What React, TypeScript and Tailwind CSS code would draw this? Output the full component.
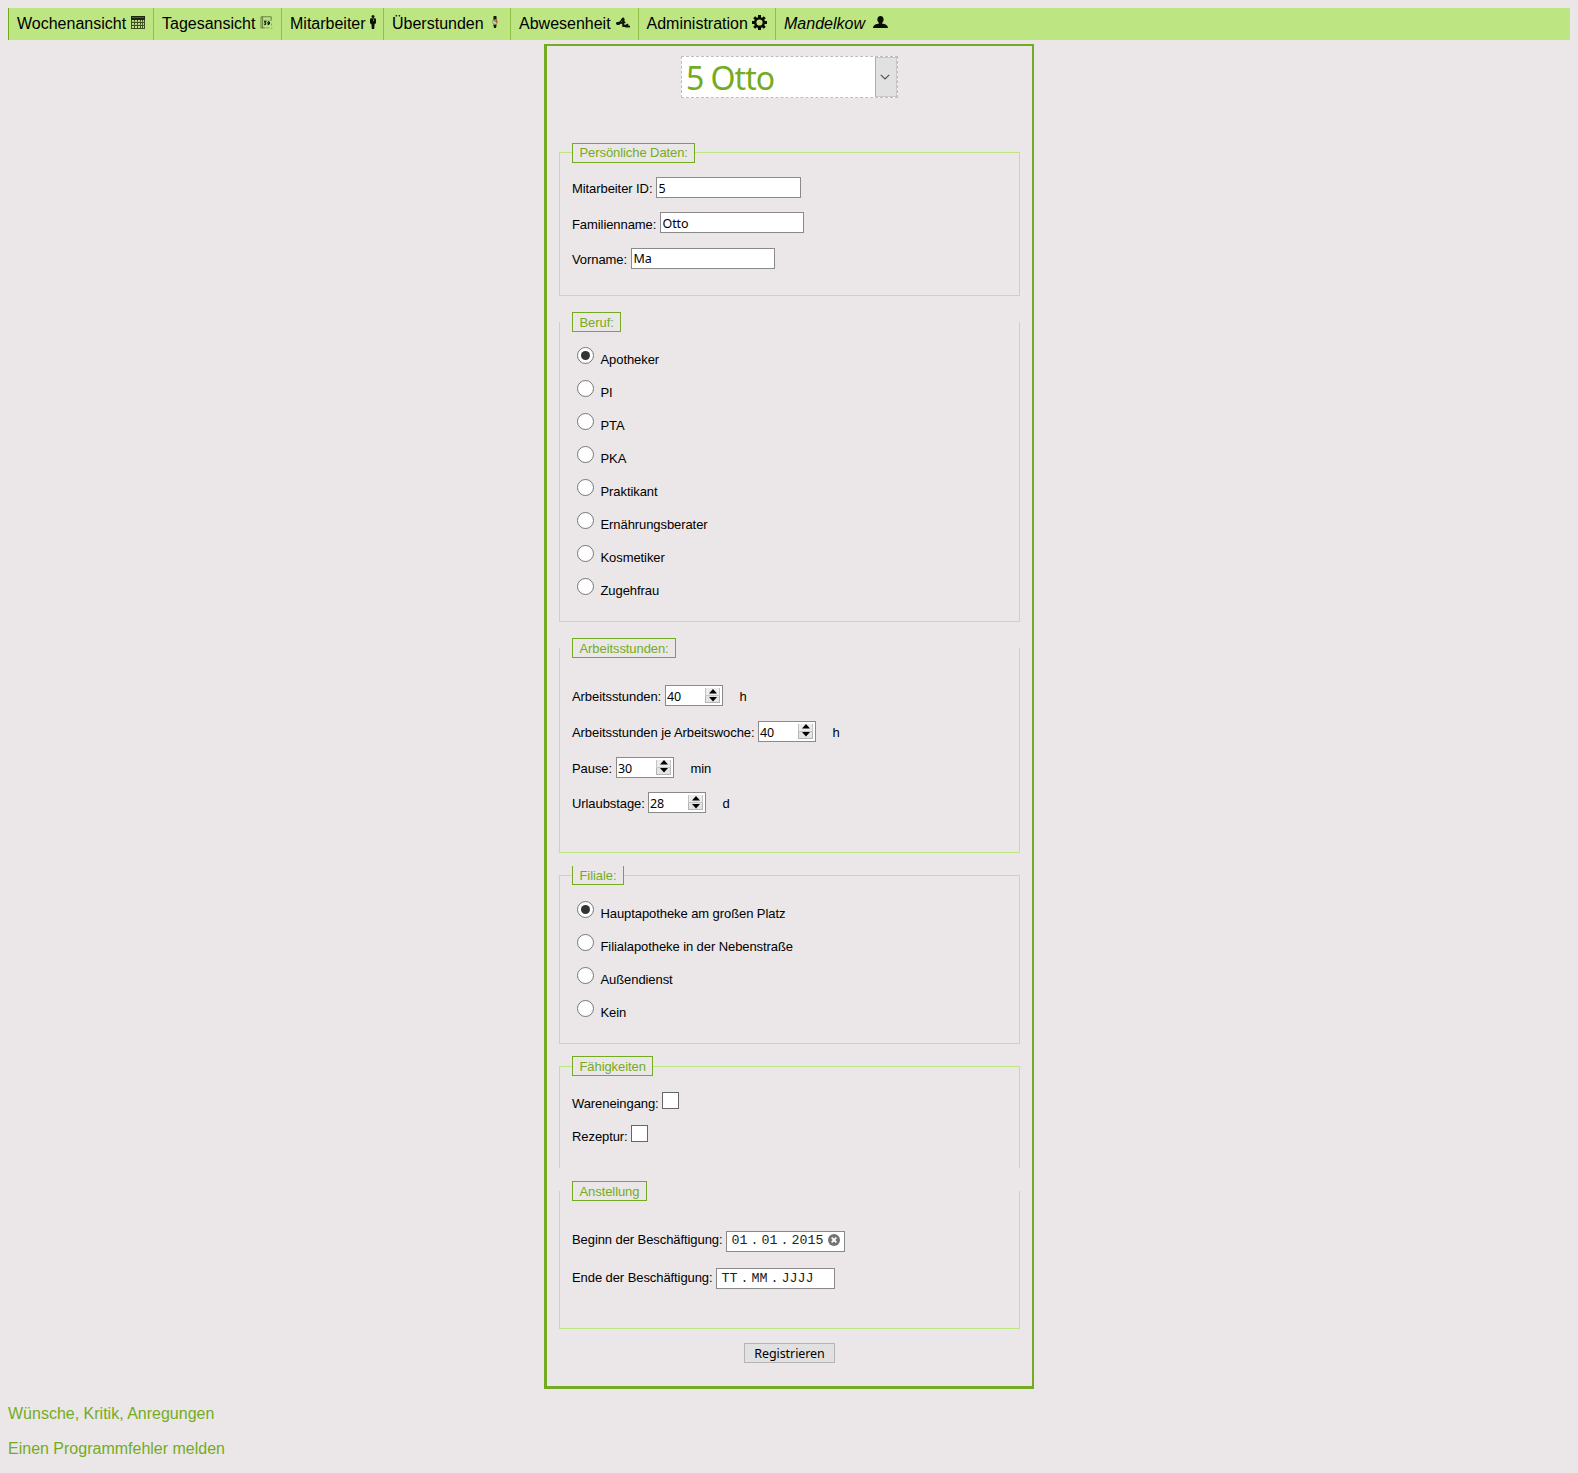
import React from "react";

function CalendarIcon() {
  return (
    <svg className="h-[13px] w-[14px]" viewBox="0 0 14 13" shapeRendering="crispEdges">
      <rect x="0" y="0" width="14" height="4" fill="#1c2611" />
      <rect x="1" y="1" width="12" height="1" fill="#4c5e33" />
      <path d="M0.5 4v8.500h13V4M0 6.500h14M0 9.500h14M3.500 4v8M6.500 4v8M9.500 4v8M11.500 4v8" fill="none" stroke="#3d4f25" strokeWidth="1" />
      <path d="M1 5.500h12M1 8.500h12" stroke="#93b364" strokeWidth="1" opacity="0.4" />
    </svg>
  );
}

function DayIcon() {
  return (
    <svg className="h-[13px] w-[13px]" viewBox="0 0 13 13">
      <path d="M1 12V.8h10.200v4M1 11.900h4M2.600 1v11" fill="none" stroke="#5d753d" strokeWidth="0.9" />
      <path d="M2.500 4.200h8.500" stroke="#86a35c" strokeWidth="0.6" />
      <path d="M4.200 5.400h1.600l-1 1.400c1.400 0 1.400 1.900-.6 1.800M9.300 6.200c-1.400-.9-2 1.100-.9 1.300 1.300.1 1.300-1 .9-1.300.4 1.200.3 2.300-1.700 2.400" fill="none" stroke="#10150a" strokeWidth="1.100" />
      <path d="M5.500 11.800h4M11.500 7.500v2M10.800 12.200h1.600" stroke="#7d9a55" strokeWidth="0.8" />
    </svg>
  );
}

function PersonIcon() {
  return (
    <svg className="ml-px h-[14px] w-[6px]" viewBox="0 0 6 14" preserveAspectRatio="none">
      <circle cx="3" cy="1.500" r="1.500" fill="#111a08" />
      <path d="M1.200 3.200h3.600c.8 0 1.200.6 1.200 1.500v3.600L4.600 9 4.200 14H1.800L1.400 9 0 8.300V4.700c0-.9.4-1.500 1.200-1.500Z" fill="#0b1004" />
      <path d="M3 3.400 4 5.500l-.7 1Z" fill="#bde682" />
    </svg>
  );
}

function WatchIcon() {
  return (
    <svg className="h-[13px] w-[6px]" viewBox="0 0 6 13">
      <path d="M1.600 0h2.800l.3 4H1.300ZM1.300 8.400h3.400L4 12H2Z" fill="#141909" />
      <circle cx="3" cy="5.900" r="2.400" fill="#d2dcb7" stroke="#6c7a4d" strokeWidth="0.7" />
      <path d="m2 4.200 1.200 1.400" fill="none" stroke="#333" strokeWidth="0.8" />
      <path d="M2.800 4.400h2.200v2h-1Z" fill="#e02b13" />
    </svg>
  );
}

function BeachIcon() {
  return (
    <svg className="h-[11px] w-[14px]" viewBox="0 0 14 11">
      <path d="M0 6.400c0-1 .8-1.500 2-1.400l2-.8L5 2.500 6.300.8l1.400-.3.8 1.300.1 2.700 1 .5-.2.900-1 .2v1.800l1.700-.3.900-1 1.400.6v1.300l1.500.2.400 1-.6.900H10l-1.200-.5-2.400-.2-.3-3.200-1.900.3-1 1H.9Z" fill="#10180a" />
      <path d="m5.200 4.800 1-.8" stroke="#8cab60" strokeWidth="0.800" />
    </svg>
  );
}

function GearIcon() {
  return (
    <svg className="h-[15px] w-[15px]" viewBox="0 0 15 15">
      <g fill="#0a0e04">
        <path d="M6 0h3v3.500H6ZM6 11.500h3V15H6ZM0 6h3.500v3H0ZM11.500 6H15v3h-3.500Z" />
        <path d="m1.200 3.200 2-2 2.400 2.400-2 2ZM9.400 11.400l2-2 2.400 2.400-2 2ZM11.800 1.200l2 2-2.400 2.400-2-2ZM3.600 9.400l2 2-2.400 2.400-2-2Z" />
      </g>
      <circle cx="7.500" cy="7.500" r="4.300" fill="none" stroke="#0a0e04" strokeWidth="2.400" />
    </svg>
  );
}

function UserIcon() {
  return (
    <svg className="h-[12px] w-[15px]" viewBox="0 0 15 12">
      <ellipse cx="7.500" cy="3.500" rx="3.100" ry="3.500" fill="#0a0e04" />
      <path d="M6 6h3v1.600c3 .5 5.600 1.300 6 4.400H0c.4-3.100 3-3.900 6-4.400Z" fill="#0a0e04" />
    </svg>
  );
}

const navItems = [
  { label: "Wochenansicht", width: "w-[145px]", text: "w-[114px]", icon: <CalendarIcon />, pad: "pt-2" },
  { label: "Tagesansicht", width: "w-[128px]", text: "w-[98px]", icon: <DayIcon />, pad: "pt-2" },
  { label: "Mitarbeiter", width: "w-[102px]", text: "w-[79px]", icon: <PersonIcon />, pad: "pt-[7px]" },
  { label: "Überstunden", width: "w-[127px]", text: "w-[100px]", icon: <WatchIcon />, pad: "pt-2" },
  { label: "Abwesenheit", width: "w-[128px]", text: "w-[97px]", icon: <BeachIcon />, pad: "pt-[9px]" },
  { label: "Administration", width: "w-[137px]", text: "w-[105px] -ml-[0.5px] mr-[0.5px]", icon: <GearIcon />, pad: "pt-[7px]" },
  { label: "Mandelkow", width: "w-[130px]", text: "w-[89px] italic", icon: <UserIcon />, pad: "pt-2" },
];

function Group({ title, box, legend, body, children }: { title: string; box: string; legend: string; body: string; children: React.ReactNode }) {
  return (
    <section className={`border-[#bde682] pl-3 ${box}`}>
      <h2 className={`whitespace-nowrap border-[#73ac22] bg-[#ebe7e8] pl-[6.5px] text-[#73ac22] ${legend}`}>{title}</h2>
      <div className={`flex flex-col ${body}`}>{children}</div>
    </section>
  );
}

function Radio({ label, checked = false }: { label: string; checked?: boolean }) {
  return (
    <label className="flex h-[33px] pl-[5px]">
      <span className="flex size-[17px] items-center justify-center rounded-full border border-[#777] bg-white">
        {checked && <span className="size-[9px] rounded-full bg-[#333]" />}
      </span>
      <span className="ml-[6.5px] mt-1 leading-[18px]">{label}</span>
    </label>
  );
}

function TextRow({ label, width, field, value }: { label: string; width: string; field: string; value: string }) {
  return (
    <label className="flex h-[21px]">
      <span className={`shrink-0 whitespace-nowrap leading-[23px] ${width}`}>{label}</span>
      <input
        defaultValue={value}
        className={`h-[21px] border border-[#8a8a8a] bg-white px-[1.5px] pt-px font-['Noto_Sans',sans-serif] text-[12.5px] outline-none ${field}`}
      />
    </label>
  );
}

function Spinner() {
  return (
    <span className="mt-0.5 flex h-[15px] w-[15px] flex-col">
      <span className="flex h-2 items-center justify-center border-x border-b border-[#c4c4c4] bg-[#ececec]">
        <svg className="-mt-px h-[5px] w-2" viewBox="0 0 8 5"><path d="M4 0 8 4.500H0Z" fill="#000" /></svg>
      </span>
      <span className="flex h-[7px] items-center justify-center border-x border-b border-[#b5b5b5] bg-[#e4e4e4]">
        <svg className="h-[5px] w-2" viewBox="0 0 8 5"><path d="M0 0h8L4 4.500Z" fill="#000" /></svg>
      </span>
    </span>
  );
}

function NumberRow({ label, width, value, unit }: { label: string; width: string; value: string; unit: string }) {
  return (
    <div className="flex h-[21px]">
      <span className={`shrink-0 whitespace-nowrap leading-[23px] ${width}`}>{label}</span>
      <span className="flex h-[21px] w-[58px] justify-between border border-[#8a8a8a] bg-white pl-px pr-0.5">
        <span className="font-['Noto_Sans',sans-serif] text-[12.5px] leading-[21px]">{value}</span>
        <Spinner />
      </span>
      <span className="ml-[16.5px] leading-[23px]">{unit}</span>
    </div>
  );
}

function DateRow({ label, width, line, parts, clearable = false }: { label: string; width: string; line: string; parts: string[]; clearable?: boolean }) {
  return (
    <div className={`flex h-[21px] ${line}`}>
      <span className={`shrink-0 whitespace-nowrap ${width}`}>{label}</span>
      <span className="flex h-[21px] w-[119px] border border-[#8a8a8a] bg-white pl-[4.5px] font-['Liberation_Mono',monospace] text-[13.33px] tracking-normal text-[#222]">
        <span className="w-4">{parts[0]}</span>
        <span className="w-[14px] pl-[3px]">.</span>
        <span className="w-4">{parts[1]}</span>
        <span className="w-[14px] pl-[3px]">.</span>
        <span className="w-8">{parts[2]}</span>
        {clearable && (
          <svg className="ml-[4.5px] mt-0.5 h-3 w-3" viewBox="0 0 12 12">
            <circle cx="6" cy="6" r="6" fill="#747474" />
            <path d="m3.700 3.700 4.600 4.600m0-4.600-4.600 4.600" stroke="#fff" strokeWidth="1.800" />
          </svg>
        )}
      </span>
    </div>
  );
}

function CheckRow({ label, width }: { label: string; width: string }) {
  return (
    <label className="flex h-[33px]">
      <span className={`shrink-0 pt-[3px] leading-[18px] ${width}`}>{label}</span>
      <span className="size-[17px] border border-[#666] bg-white" />
    </label>
  );
}

export default function App() {
  return (
    <div className="h-[1473px] bg-[#ebe7e8] p-2 font-['Liberation_Sans',Arial,sans-serif] text-base text-black">
      <nav className="flex h-8 bg-[#bde682]">
        {navItems.map((item) => (
          <a key={item.label} className={`flex pl-2 ${item.width} border-l border-[#8fc04a] first:border-[#73ac22]`}>
            <span className={`shrink-0 whitespace-nowrap leading-8 ${item.text}`}>{item.label}</span>
            <span className={item.pad}>{item.icon}</span>
          </a>
        ))}
      </nav>

      <main className="mx-auto mt-1 h-[1345px] w-[490px] border-b-[3px] border-l-[3px] border-r-2 border-t-2 border-[#73ac22] px-3 pt-[10px] text-[13px] tracking-[-0.08px]">
        <div className="ml-[122px] flex h-[42px] w-[217px] border border-dashed border-[#c0bcbd] bg-white">
          <span className="flex-1 pl-1 font-['Noto_Sans',sans-serif] text-[32px] leading-[41px] tracking-[-1px] text-[#73ac22]">5 Otto</span>
          <span className="flex w-[22px] items-center justify-center border border-[#c8c8c8] border-l-[#adadad] bg-[#e1e1e1] pr-0.5">
            <svg className="h-[6px] w-[10px]" viewBox="0 0 10 6"><path d="m.8.8 4.200 4.200L9.200.8" fill="none" stroke="#505050" strokeWidth="1.200" /></svg>
          </span>
        </div>

        <Group title="Persönliche Daten:" box="mt-[54px] h-[144px] border" legend="h-5 -mt-[10px] w-[123px] border leading-[17px]" body="mt-[14px] gap-[14.4px]">
          <TextRow label="Mitarbeiter ID:" width="w-[84px]" field="w-[145px]" value="5" />
          <TextRow label="Familienname:" width="w-[88px] pt-px" field="w-[144px]" value="Otto" />
          <TextRow label="Vorname:" width="w-[59px]" field="w-[144px]" value="Ma" />
        </Group>

        <Group title="Beruf:" box="mt-[26px] h-[300px] border-x border-b" legend="h-5 relative top-[-10px] -mb-[10px] w-[49px] border leading-[19px]" body="mt-[15px]">
          <Radio label="Apotheker" checked />
          <Radio label="PI" />
          <Radio label="PTA" />
          <Radio label="PKA" />
          <Radio label="Praktikant" />
          <Radio label="Ernährungsberater" />
          <Radio label="Kosmetiker" />
          <Radio label="Zugehfrau" />
        </Group>

        <Group title="Arbeitsstunden:" box="mt-[26px] h-[205px] border-x border-b" legend="h-5 relative top-[-10px] -mb-[10px] w-[104px] border leading-[19px]" body="mt-[27px] gap-[14.8px]">
          <NumberRow label="Arbeitsstunden:" width="w-[93px]" value="40" unit="h" />
          <NumberRow label="Arbeitsstunden je Arbeitswoche:" width="w-[186px]" value="40" unit="h" />
          <NumberRow label="Pause:" width="w-[44px]" value="30" unit="min" />
          <NumberRow label="Urlaubstage:" width="w-[76px]" value="28" unit="d" />
        </Group>

        <Group title="Filiale:" box="mt-[22px] h-[169px] border" legend="h-[19px] -mt-[10px] w-[52px] border-x border-b leading-[20px]" body="mt-4">
          <Radio label="Hauptapotheke am großen Platz" checked />
          <Radio label="Filialapotheke in der Nebenstraße" />
          <Radio label="Außendienst" />
          <Radio label="Kein" />
        </Group>

        <Group title="Fähigkeiten" box="mt-[22px] h-[102px] border-x border-t" legend="h-5 -mt-[11px] w-[81px] border leading-[19px]" body="mt-4">
          <CheckRow label="Wareneingang:" width="w-[90px]" />
          <CheckRow label="Rezeptur:" width="w-[59px]" />
        </Group>

        <Group title="Anstellung" box="mt-[23px] h-[138px] border-x border-b" legend="h-5 relative top-[-10px] -mb-[10px] w-[75px] border leading-[19px]" body="mt-[30px] gap-4">
          <DateRow label="Beginn der Beschäftigung:" width="w-[154px]" line="leading-[18px]" parts={["01", "01", "2015"]} clearable />
          <DateRow label="Ende der Beschäftigung:" width="w-[144px]" line="leading-[20px]" parts={["TT", "MM", "JJJJ"]} />
        </Group>

        <button className="ml-[185px] mt-[14px] block h-5 w-[91px] border border-[#b5b5b5] bg-[#e1e1e1] pt-px font-['Noto_Sans',sans-serif] text-[12.5px] leading-[18px]">
          Registrieren
        </button>
      </main>

      <footer className="mt-4 flex flex-col gap-[17px] leading-[18px] text-[#73ac22]">
        <a>Wünsche, Kritik, Anregungen</a>
        <a>Einen Programmfehler melden</a>
      </footer>
    </div>
  );
}
